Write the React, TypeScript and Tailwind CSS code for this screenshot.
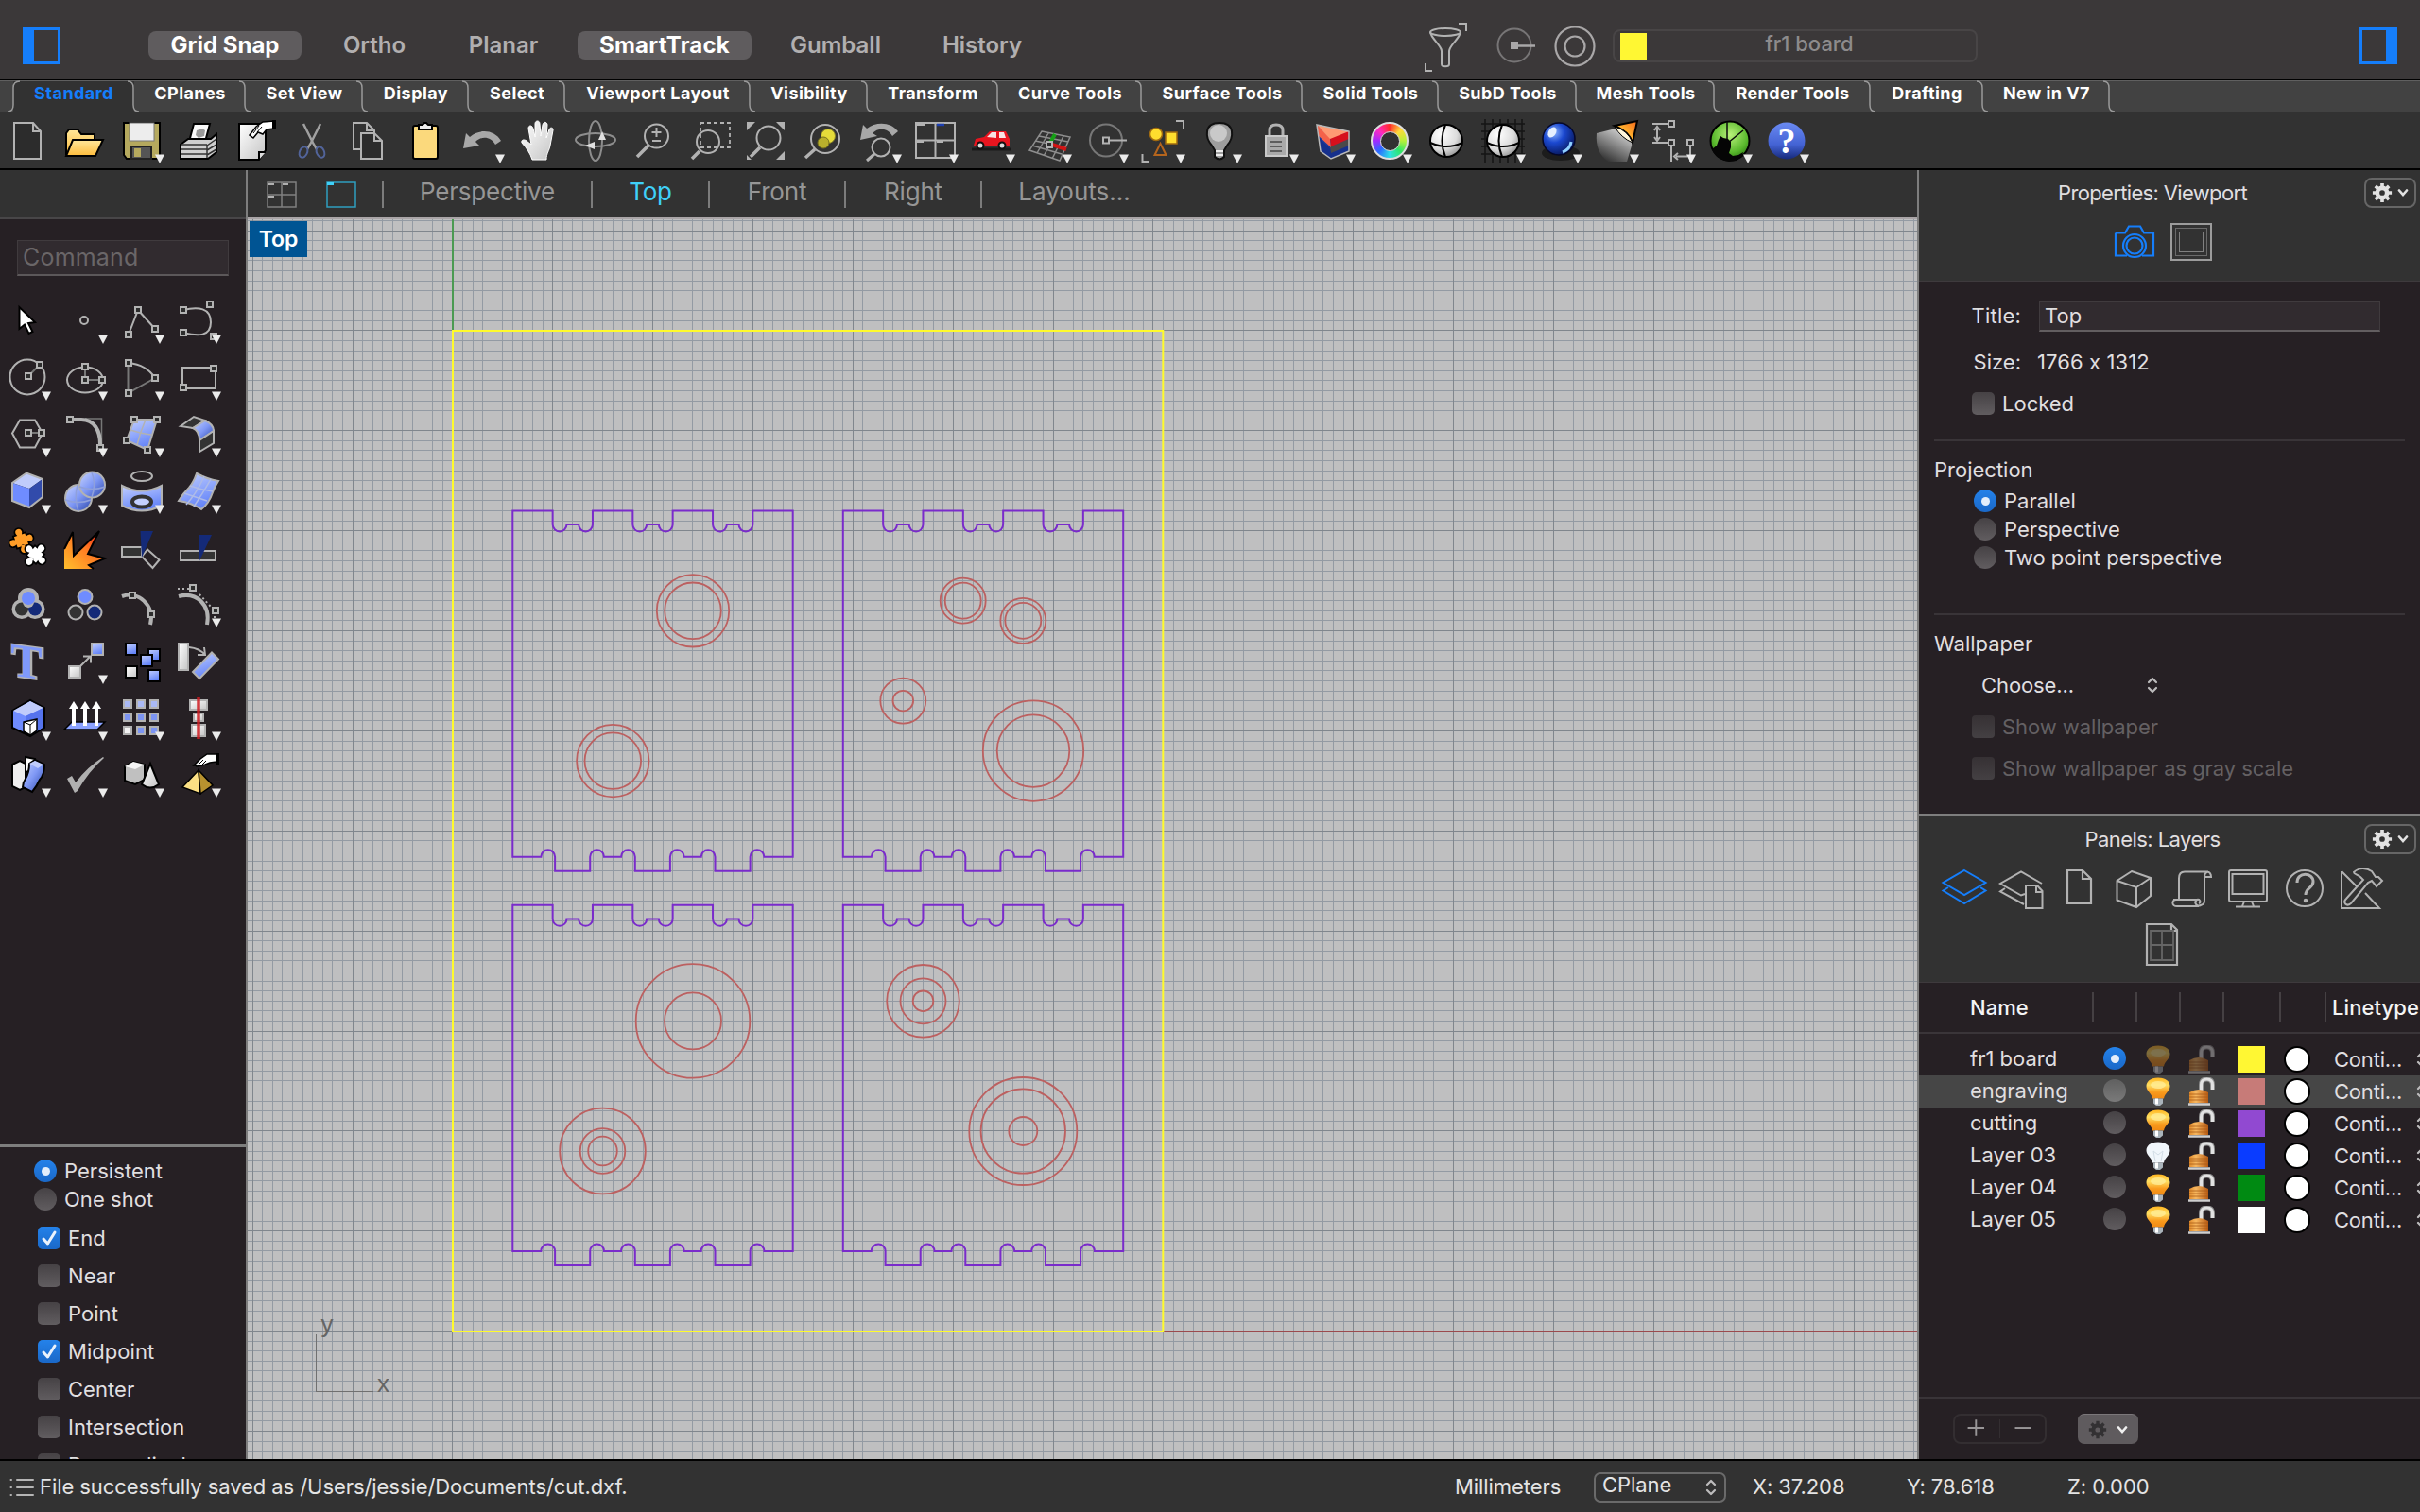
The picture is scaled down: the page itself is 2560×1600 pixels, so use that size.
import React from "react";

/* ---------- shared drawing helpers ---------- */

const LINE = "#b2b2b2";

const Cell = ({ children, arrow }: { children?: React.ReactNode; arrow?: boolean }) => (
  <svg className="h-[60px] w-[60px] shrink-0" viewBox="0 0 60 60" fill="none" stroke={LINE} strokeWidth={2}>
    {children}
    {arrow && <path d="M44 44.5h10l-5 9.5z" fill="#ececec" stroke="none" />}
  </svg>
);

const H = ({ x, y }: { x: number; y: number }) => (
  <rect x={x - 3} y={y - 3} width={6} height={6} fill="#2d2d2d" stroke={LINE} strokeWidth={2} />
);

const Defs = () => (
  <svg className="absolute h-0 w-0">
    <defs>
      <linearGradient id="blue" x1="0" y1="0" x2="0.4" y2="1">
        <stop offset="0" stopColor="#c3d0ff" />
        <stop offset="1" stopColor="#6484f8" />
      </linearGradient>
      <linearGradient id="blueDeep" x1="0" y1="0" x2="1" y2="1">
        <stop offset="0" stopColor="#c8d4ff" />
        <stop offset="0.5" stopColor="#7f98f5" />
        <stop offset="1" stopColor="#2a45a8" />
      </linearGradient>
      <linearGradient id="fire" x1="0" y1="1" x2="0.9" y2="0.1">
        <stop offset="0" stopColor="#ffc02e" />
        <stop offset="0.6" stopColor="#ff7a22" />
        <stop offset="1" stopColor="#f02a18" />
      </linearGradient>
      <linearGradient id="white" x1="0" y1="0" x2="1" y2="1">
        <stop offset="0" stopColor="#ffffff" />
        <stop offset="1" stopColor="#c4c4c4" />
      </linearGradient>
      <linearGradient id="gold" x1="0" y1="0" x2="0" y2="1">
        <stop offset="0" stopColor="#ffe79a" />
        <stop offset="1" stopColor="#fdbb3c" />
      </linearGradient>
      <linearGradient id="lamp" x1="0" y1="1" x2="1" y2="0">
        <stop offset="0" stopColor="#ffd75e" />
        <stop offset="0.5" stopColor="#ffb02e" />
        <stop offset="1" stopColor="#f2661a" />
      </linearGradient>
      <radialGradient id="ball" cx="0.35" cy="0.3" r="0.8">
        <stop offset="0" stopColor="#ffffff" />
        <stop offset="0.6" stopColor="#dcdcdc" />
        <stop offset="1" stopColor="#8a8a8a" />
      </radialGradient>
      <radialGradient id="blueBall" cx="0.35" cy="0.3" r="0.8">
        <stop offset="0" stopColor="#8ab4ff" />
        <stop offset="0.4" stopColor="#1b48d0" />
        <stop offset="1" stopColor="#04104a" />
      </radialGradient>
      <radialGradient id="green" cx="0.5" cy="0.35" r="0.65">
        <stop offset="0" stopColor="#b9f27a" />
        <stop offset="0.7" stopColor="#58b82c" />
        <stop offset="1" stopColor="#2f7d14" />
      </radialGradient>
      <linearGradient id="help" x1="0" y1="0" x2="0" y2="1">
        <stop offset="0" stopColor="#6a8af2" />
        <stop offset="0.6" stopColor="#4463d4" />
        <stop offset="1" stopColor="#16297a" />
      </linearGradient>
      <linearGradient id="bulbOn" x1="0" y1="0" x2="0" y2="1">
        <stop offset="0" stopColor="#ffb41f" />
        <stop offset="0.35" stopColor="#ffe063" />
        <stop offset="0.7" stopColor="#f99a1c" />
        <stop offset="1" stopColor="#f08a14" />
      </linearGradient>
      <linearGradient id="lockBody" x1="0" y1="0" x2="1" y2="0">
        <stop offset="0" stopColor="#e08a2a" />
        <stop offset="0.35" stopColor="#f8b860" />
        <stop offset="1" stopColor="#b85a12" />
      </linearGradient>
      <linearGradient id="beam" x1="0.9" y1="0" x2="0.3" y2="1">
        <stop offset="0" stopColor="#e8e8e8" />
        <stop offset="1" stopColor="#323232" />
      </linearGradient>
    </defs>
  </svg>
);

/* ---------- top strip ---------- */

const PanelToggle = ({ right }: { right?: boolean }) => (
  <div className={right ? "h-[39px] w-[40px] border-[3px] border-r-[12px] border-[#157efb]" : "h-[39px] w-[40px] border-[3px] border-l-[12px] border-[#157efb]"} />
);

const SnapBar = () => (
  <div className="flex h-[84px] items-center bg-[#3b3839] pt-[13px] text-[24px] font-semibold leading-[30px] text-[#b1afb0] whitespace-nowrap">
    <div className="w-[157px] shrink-0 pl-[24px]"><PanelToggle /></div>
    <div className="flex h-[30px] w-[162px] -translate-y-px justify-center rounded-[8px] bg-[#5f5c5e] font-bold text-white tracking-[0px]">Grid Snap</div>
    <div className="-translate-y-px w-[154px] text-center">Ortho</div>
    <div className="-translate-y-px w-[119px] text-center">Planar</div>
    <div className="ml-[19px] flex h-[30px] w-[184px] -translate-y-px justify-center rounded-[8px] bg-[#5f5c5e] font-bold text-white tracking-[0.2px]">SmartTrack</div>
    <div className="ml-[30px] -translate-y-px w-[118px] text-center">Gumball</div>
    <div className="ml-[37px] -translate-y-px w-[118px] text-center">History</div>
    <svg className="ml-[402px] h-[60px] w-[60px] -translate-y-px" viewBox="0 0 60 60" fill="none" stroke={LINE} strokeWidth={2}>
      <path d="M8 49v8h7M43 7h8v8" />
      <ellipse cx="29" cy="16" rx="16" ry="4" />
      <path d="M13 16c1 7 12 14 12 20v14c0 3 8 3 8 0V36c0-6 11-13 12-20" />
    </svg>
    <svg className="ml-[18px] h-[48px] w-[48px] -translate-y-px" viewBox="0 0 48 48" fill="none">
      <circle cx="24" cy="24" r="17.5" stroke="#777576" strokeWidth={2} />
      <rect x="20" y="20" width="8" height="8" fill="#a9a7a8" />
      <path d="M26 24.500h20" stroke="#a9a7a8" strokeWidth={2.500} />
    </svg>
    <svg className="ml-[16px] h-[48px] w-[48px]" viewBox="0 0 48 48" fill="none" stroke="#a9a7a8" strokeWidth={2.200}>
      <circle cx="24" cy="24" r="20.500" />
      <circle cx="24" cy="24" r="10.500" />
    </svg>
    <div className="ml-[16px] flex h-[35px] w-[386px] items-center rounded-[8px] border-2 border-[#484546] pl-[6px] text-[22px] font-medium text-[#8d8b8c]">
      <div className="h-7 w-7 bg-[#fff733]" />
      <div className="w-[344px] text-center -translate-y-[3px]">fr1 board</div>
    </div>
    <div className="ml-auto pr-[24px]"><PanelToggle right /></div>
  </div>
);

const TABS: [string, string][] = [
  ["Standard", "w-[128px]"], ["CPlanes", "w-[118px]"], ["Set View", "w-[124px]"], ["Display", "w-[112px]"],
  ["Select", "w-[102px]"], ["Viewport Layout", "w-[196px]"], ["Visibility", "w-[124px]"], ["Transform", "w-[138px]"],
  ["Curve Tools", "w-[152px]"], ["Surface Tools", "w-[170px]"], ["Solid Tools", "w-[144px]"], ["SubD Tools", "w-[146px]"],
  ["Mesh Tools", "w-[146px]"], ["Render Tools", "w-[165px]"], ["Drafting", "w-[119px]"], ["New in V7", "w-[134px]"],
];

const TabStrip = () => (
  <div className="flex h-[35px] border-t border-black bg-[#424242] text-[18px] font-bold leading-[26px] tracking-[0.45px] text-white whitespace-nowrap">
    <div className="h-[34px] w-[14px] shrink-0 border-y border-[#8c8c8c] border-t-[#606060]" />
    {TABS.map(([name, w], i) => (
      <div
        key={name}
        className={
          w + (i === 0
            ? " relative h-[34px] shrink-0 border-t border-[#606060] bg-[#323232] text-center text-[#157efb]"
            : " relative h-[34px] shrink-0 border-y border-b-[#9a9a9a] border-t-[#606060] text-center")
        }
      >
        {name}
        {i === 0 && (
          <svg className="absolute -left-[6px] -top-px" width="14" height="34" viewBox="0 0 14 34" fill="none" stroke="#9a9a9a" strokeWidth={1.500}>
            <path d="M0 33q6 0 6-7V8q0-7 7-7" />
          </svg>
        )}
        <svg className="absolute -right-[6px] -top-px z-10" width="14" height="34" viewBox="0 0 14 34" fill="none" stroke="#9a9a9a" strokeWidth={1.500}>
          <path d="M1 1q6 0 6 7v18q0 7 6 7" />
        </svg>
      </div>
    ))}
    <div className="h-[34px] flex-1 border-y border-b-[#8c8c8c] border-t-[#606060]" />
  </div>
);

/* ---------- main toolbar ---------- */

const Toolbar = () => (
  <div className="flex h-[61px] border-b-2 border-black bg-[#323232]">
    <Cell>
      <path d="M15 11h20l8 9v29H15zM35 11v9h8" fill="#2c2c2c" />
    </Cell>
    <Cell>
      <path d="M10 45V22l3-4h9l4 5h14v6" fill="url(#gold)" stroke="#000" />
      <path d="M10 46l7-17h32l-8 17z" fill="url(#gold)" stroke="#000" />
    </Cell>
    <Cell arrow>
      <path d="M11 11h38v38H14l-3-4z" fill="#b5a95e" stroke="#000" />
      <rect x="17" y="11" width="26" height="19" fill="#ededed" stroke="#777" strokeWidth={1} />
      <rect x="19" y="36" width="21" height="13" fill="#555" stroke="#222" />
      <rect x="22" y="38" width="7" height="9" fill="#b5a95e" stroke="none" />
    </Cell>
    <Cell>
      <path d="M20 31l5-19h17l-5 19z" fill="#fafafa" stroke="#000" />
      <path d="M28 19l6-2 3 2-1 6-6 2-3-3z" fill="#999" stroke="none" />
      <path d="M11 34l8-6h24l6-5v19l-9 7H11z" fill="#cfcfcf" stroke="#000" />
      <path d="M11 34h28M11 39h28M11 44h28M39 34v14M39 35l10-7M39 40l10-6M39 45l10-6" stroke="#333" strokeWidth={1.500} />
    </Cell>
    <Cell>
      <path d="M13 12h28v28l-7 10H13z" fill="url(#white)" stroke="#000" />
      <path d="M34 50v-8h7" fill="#ddd" stroke="#000" />
      <path d="M24 24l7-9 7-5 12-1v8l-8 1-4 5-5-2-5 6z" fill="#fff" stroke="#000" strokeWidth={1.500} />
      <path d="M28 22l6-8M32 21l5-6" stroke="#000" strokeWidth={1} />
      <path d="M50 8v10" stroke="#000" strokeWidth={4} />
    </Cell>
    <Cell>
      <path d="M21 12l10 20 4 7M39 12L29 32l-4 7" stroke="#a0a0a0" strokeWidth={2.500} />
      <ellipse cx="21" cy="42" rx="4" ry="6" stroke="#52649a" transform="rotate(25 21 42)" />
      <ellipse cx="39" cy="42" rx="4" ry="6" stroke="#52649a" transform="rotate(-25 39 42)" />
    </Cell>
    <Cell>
      <path d="M22 39h-8V11h14l8 8v3M28 11v8h7" />
      <path d="M22 22h14l8 8v19H22z" fill="#2c2c2c" />
      <path d="M36 22v8h8" />
    </Cell>
    <Cell>
      <rect x="17" y="14" width="26" height="35" rx="2" fill="#fbd97c" stroke="#000" />
      <path d="M23 18v-5h4l2-2h2l2 2h4v5z" fill="#eee" stroke="#000" />
    </Cell>
    <Cell arrow>
      <path d="M10 38l3-16 4 4c10-9 26-8 33 4l-6 4c-5-9-15-9-21-3l4 4z" fill="#a8a8a8" stroke="none" />
    </Cell>
    <Cell>
      <path
        d="M23 50c-2-7-6-12-11-18-1-3 2-4 5-2l5 4-3-17c0-4 4-4 5 0l2 9V12c0-4 5-4 5 0l1 13 2-12c1-4 5-3 5 0l-1 14 3-9c1-3 5-2 4 1l-3 16c-1 6-4 8-4 15z"
        fill="url(#white)" stroke="#fff" strokeWidth={1}
      />
    </Cell>
    <Cell>
      <ellipse cx="30" cy="30" rx="7" ry="21" stroke="#8d8d8d" />
      <ellipse cx="30" cy="29" rx="21" ry="7" stroke="#8d8d8d" />
      <path d="M37 20l4 9h-8zM19 35l10-4v8z" fill="#e0e0e0" stroke="none" />
    </Cell>
    <Cell>
      <circle cx="34.500" cy="25" r="12.500" />
      <path d="M26 35L14 47" strokeWidth={3.500} />
      <path d="M34.500 16v10M29.500 21h10M30 30h9" />
    </Cell>
    <Cell>
      <circle cx="29" cy="31" r="12" />
      <path d="M20 41l-8 8" strokeWidth={3.500} />
      <path d="M21 11h31v26H21z" strokeDasharray="4 3" strokeWidth={1.800} />
    </Cell>
    <Cell>
      <circle cx="33" cy="27" r="12.500" />
      <path d="M24 37L14 47" strokeWidth={3.500} />
      <path d="M10 10h9l-9 9zM50 10h-9l9 9zM50 50h-9l9-9zM10 50h5l-5-5z" fill={LINE} stroke="none" />
    </Cell>
    <Cell>
      <circle cx="33" cy="28" r="15" />
      <circle cx="36" cy="25" r="7.500" fill="#e5dc3a" stroke="#8a8428" strokeWidth={1} />
      <circle cx="31" cy="32" r="6" fill="#b9b02c" stroke="#77711c" strokeWidth={1} />
      <path d="M22 39l-10 9" strokeWidth={3.500} />
    </Cell>
    <Cell arrow>
      <path d="M10 29l3-16 4 4c10-8 26-7 33 3l-6 5c-5-9-15-9-21-3l5 3z" fill="#a8a8a8" stroke="none" />
      <circle cx="32" cy="37" r="9.500" fill="#323232" />
      <path d="M25 44l-8 7" strokeWidth={3} />
    </Cell>
    <Cell arrow>
      <path d="M9 11h41v37H9zM29.500 11v37M9 29.500h41" />
      <path d="M10 13h8M31 31h7M10 31h7" strokeWidth={2} />
      <path d="M31 13h8" stroke="#1d3fb0" strokeWidth={2.500} />
    </Cell>
    <Cell arrow>
      <path d="M8 39h42" stroke="#1a1a1a" strokeWidth={3} />
      <path d="M10 35l2-7 9-2 6-6h17l4 8v8H10z" fill="#e8151f" stroke="none" />
      <path d="M24 26l5-5h5v6zM37 21h5l2 6h-7z" fill="#f7e3e3" stroke="none" />
      <circle cx="17" cy="35" r="3.500" fill="#ddd" stroke="#111" />
      <circle cx="40" cy="35" r="3.500" fill="#ddd" stroke="#111" />
    </Cell>
    <Cell arrow>
      <path d="M22 20l30 6-11 25-32-11zM29 22L17 43M37 23L24 46M45 25L33 49M19 25l31 6M15 30l33 7M12 35l31 9" stroke="#8e8e8e" strokeWidth={1.500} />
      <path d="M31 32l5-9" stroke="#16a016" strokeWidth={4} />
      <path d="M33 34l15 5" stroke="#d01515" strokeWidth={4} />
      <H x={30} y={34} />
    </Cell>
    <Cell arrow>
      <circle cx="30" cy="29.500" r="17" stroke="#777" />
      <path d="M33 29.500h19" />
      <H x={30} y={29.500} />
    </Cell>
    <Cell arrow>
      <path d="M44 9h8v8M8.500 44v8h7" />
      <circle cx="23" cy="23" r="6.500" fill="#ffde2e" stroke="#a06a10" strokeWidth={1.500} />
      <rect x="33" y="21" width="12" height="12" fill="#ffde2e" stroke="#a06a10" strokeWidth={1.500} />
      <path d="M27.500 33l6 12h-12z" stroke="#b5651d" />
    </Cell>
    <Cell arrow>
      <path d="M30 11c-17 0-15 16-8 24l3 5v7q5 5 10 0v-7l3-5c7-8 9-24-8-24z" fill="#9e9e9e" stroke="#111" />
      <circle cx="29" cy="22" r="9" fill="#c9c9c9" stroke="none" />
      <path d="M26 41h8M26 45h8" stroke="#eee" />
    </Cell>
    <Cell arrow>
      <path d="M23 26v-7q0-6 7-6t7 6v7" strokeWidth={3} />
      <rect x="19" y="25" width="22" height="21" fill="#a9a9a9" stroke="#c9c9c9" />
      <path d="M24 31h12M24 36h12M24 41h12" stroke="#444" strokeWidth={1.500} />
    </Cell>
    <Cell arrow>
      <path d="M13 13l4 28 11 8 19-8V20z" fill="#1a3a9c" stroke="none" />
      <path d="M15 27l13 12 19-7v9L28 49l-11-8z" fill="#16308c" stroke="none" />
      <path d="M27 36l20-8v7l-19 8z" fill="#4a4a4a" stroke="none" />
      <path d="M13 13l14 14 1 10-13-12z" fill="#f4624a" stroke="none" />
      <path d="M27 27l20-7v8l-19 8z" fill="#d6101c" stroke="none" />
      <path d="M13 13l34 7-20 8z" fill="#ff9a73" stroke="none" />
      <path d="M13 13l4 28 11 8 19-8V20z" stroke="#b9b9b9" strokeWidth={1.500} />
    </Cell>
    <div className="flex h-[60px] w-[60px] items-center justify-center">
      <svg className="absolute h-[60px] w-[60px]" viewBox="0 0 60 60"><path d="M44 44.500h10l-5 9.500z" fill="#ececec" /></svg>
      <div className="flex h-10 w-10 items-center justify-center rounded-full border-2 border-[#ddd] bg-[conic-gradient(#ff2a2a,#ffd93a,#b6f03a,#2ee66a,#2ee0e6,#2a6cff,#a02aff,#ff2ac0,#ff2a2a)]">
        <div className="h-[21px] w-[21px] rounded-full border border-[#ddd] bg-[#323232]" />
      </div>
    </div>
    <Cell>
      <circle cx="30" cy="30" r="17" fill="url(#ball)" stroke="#000" />
      <path d="M13 32q17 8 34 0M29 13q-7 17 0 34" stroke="#000" />
    </Cell>
    <Cell arrow>
      <path d="M7 12h46M7 20h46M7 28h46M7 36h46M7 44h46M11 7v46M19 7v46M27 7v46M35 7v46M43 7v46M50 7v46" stroke="#151515" strokeWidth={1.500} />
      <circle cx="30" cy="30" r="17" fill="url(#ball)" stroke="#000" />
      <path d="M13 32q17 8 34 0M29 13q-7 17 0 34" stroke="#000" />
    </Cell>
    <Cell arrow>
      <ellipse cx="31" cy="43" rx="20" ry="8" fill="#1c1c1c" stroke="none" />
      <circle cx="29" cy="28" r="17" fill="url(#blueBall)" stroke="#05082a" strokeWidth={1.500} />
      <ellipse cx="22" cy="21" rx="4" ry="6" fill="#e6f0ff" stroke="none" transform="rotate(30 22 21)" />
      <path d="M33 42q8-3 9-11" stroke="#8fd0ff" strokeWidth={3} />
    </Cell>
    <Cell arrow>
      <path d="M29 17L9 22q-2 20 12 30h20l6-20z" fill="url(#beam)" stroke="none" />
      <path d="M28 14l24-5-5 23q-4-12-19-18z" fill="url(#lamp)" stroke="#000" />
      <path d="M28 15q14 4 19 17-12-5-19-17z" fill="#fff6dd" stroke="#000" strokeWidth={1} />
    </Cell>
    <Cell arrow>
      <path d="M8 12h17M8 32h17M13 17v11M10 19l3-4 3 4M10 26l3 4 3-4M28 36v16M48 36v16M33 46.500h12M35 43l-4 3.500 4 3.500" strokeWidth={2} />
      <H x={28} y={12} /><H x={28} y={32} /><H x={48} y={32} />
    </Cell>
    <Cell arrow>
      <circle cx="30" cy="30" r="20.500" fill="url(#green)" stroke="#000" />
      <path d="M27 10v20M44 19L28 32" stroke="#0a0a0a" strokeWidth={1.500} />
      <path d="M18 29l2-4 3 2 5 1 3 3v6l-2 6 4 3 6-1 5-3-1 4-6 5-8 1-5-1q-10-3-13-12l5-4z" fill="#050505" stroke="none" />
    </Cell>
    <Cell arrow>
      <circle cx="30" cy="30" r="19.500" fill="url(#help)" stroke="none" />
      <text x="30" y="43" textAnchor="middle" fill="#fff" stroke="none" fontFamily="Liberation Serif, serif" fontWeight="700" fontSize="38">?</text>
    </Cell>
  </div>
);

/* ---------- left column ---------- */

const Sq = ({ x, y, s = 10, fill = "url(#blue)", stroke = LINE }: { x: number; y: number; s?: number; fill?: string; stroke?: string }) => (
  <rect x={x - s / 2} y={y - s / 2} width={s} height={s} fill={fill} stroke={stroke} />
);

const Jigsaw = ({ x, y, turn, fill }: { x: number; y: number; turn: number; fill: string }) => (
  <g transform={`translate(${x} ${y}) rotate(${turn})`}>
    {["#000", fill].map((c, i) => (
      <g key={c} fill={c} stroke={c} strokeWidth={i ? 0 : 3.5}>
        <path d="M-6-6h3.500q-1-2-1-3a3.500 3.500 0 0 1 7 0q0 1-1 3H6v3.500q2-1 3-1a3.500 3.500 0 0 1 0 7q-1 0-3-1V6H2.500q-2-3-5 0H-6V2.500q-2 1-3 1a3.500 3.500 0 0 1 0-7q1 0 3 1z" />
        <path d="M-2 5h4q-.5 2 1.200 3.500a3.500 3.500 0 1 1-6.400 0Q-1.500 7-2 5z" />
      </g>
    ))}
  </g>
);

const ToolPalette = () => (
  <div className="grid w-[240px] grid-cols-[60px_60px_60px_60px]">
    <Cell><path d="M20.500 15v23l5.500-4.500 4.500 9.500 4-2-4.500-9 7-1z" fill="#fff" stroke="#000" /></Cell>
    <Cell arrow><circle cx="29" cy="29" r="4" /></Cell>
    <Cell arrow><path d="M16 44l10-26 18 20" /><H x={16} y={44} /><H x={26} y={18} /><H x={44} y={38} /></Cell>
    <Cell arrow><path d="M14 18C30 14 43 16 43 31S30 46 14 42" /><H x={14} y={18} /><H x={42} y={12} /><H x={14} y={42} /><H x={46} y={46} /></Cell>

    <Cell arrow><circle cx="29" cy="29" r="18.500" /><path d="M30 28l12-12" stroke="#777" /><H x={30} y={28} /><H x={42} y={16} /></Cell>
    <Cell arrow><ellipse cx="30" cy="32" rx="19" ry="13.500" /><path d="M30 18v14h18" stroke="#777" /><H x={30} y={18} /><H x={30} y={32} /><H x={48} y={32} /></Cell>
    <Cell arrow><path d="M15.500 14v32L44 30" stroke="#777" /><path d="M16 14q19 2 28 16" /><H x={16} y={14} /><H x={44} y={30} /><H x={16} y={46} /></Cell>
    <Cell arrow><path d="M13 19h35v22H13z" /><H x={46} y={20} /><H x={14} y={40} /></Cell>

    <Cell arrow><path d="M13 28.500l8-14h16l8 14-8 15H21z" /><path d="M30 28h14" stroke="#777" /><H x={30} y={28} /><H x={44} y={28} /></Cell>
    <Cell arrow><path d="M30 13h17.500v28" stroke="#777" strokeWidth={1.500} /><H x={14} y={14} /><H x={46} y={44} /><path d="M18 14h8c14 0 20 12 20 26" strokeWidth={4} /></Cell>
    <Cell arrow>
      <path d="M22 14h24L36 46 14 36z" fill="url(#blue)" />
      <path d="M34 14q-6 14-9 27M18 25q12 4 22 5" strokeWidth={1.500} />
      <H x={22} y={14} /><H x={46} y={14} /><H x={36} y={46} /><H x={14} y={36} />
    </Cell>
    <Cell arrow>
      <path d="M11 21l14-10 12 4-13 8z" fill="#333" />
      <path d="M24 23l13-8q9 4 9 11l-15 10q0-10-7-13z" fill="url(#blueDeep)" />
      <path d="M31 36l15-10v13L31 48z" fill="#333" />
    </Cell>

    <Cell arrow>
      <path d="M13 21l15-10.500L45 17 31 27z" fill="#c0ccfb" stroke="none" />
      <path d="M13 21l18 6v20l-18-7z" fill="#6f8cff" stroke="none" />
      <path d="M31 27l14-10v19L31 47z" fill="#324bab" stroke="none" />
      <path d="M13 21l15-10.500L45 17v19L31 47l-18-7z" />
    </Cell>
    <Cell arrow>
      <circle cx="23" cy="37" r="14" fill="url(#blueDeep)" /><path d="M9 39q14 5 27 0M22 23q-4 14 1 28" stroke="#8fa0dc" strokeWidth={1.500} />
      <circle cx="37.500" cy="23" r="13.500" fill="url(#blueDeep)" /><path d="M24 25q14 5 27 0M37 10q5 13 0 26" stroke="#8fa0dc" strokeWidth={1.500} />
    </Cell>
    <Cell arrow>
      <ellipse cx="30" cy="14" rx="11" ry="5" />
      <path d="M9 24q21 11 42 0v21q-21 11-42 0z" fill="url(#blue)" />
      <ellipse cx="30" cy="41" rx="10" ry="5.500" fill="#c3d0ff" stroke="#333" strokeWidth={4} />
    </Cell>
    <Cell arrow>
      <path d="M28 11q11 6 23 8-4 6-6 12-4 12-12 18-10-7-24-9 5-8 11-14 5-6 8-15z" fill="url(#blue)" />
      <path d="M36 14q-8 18-19 30M43 17Q34 33 25 46M21 24q11 4 24 6M15 32q12 4 24 8" stroke="#aebbe8" strokeWidth={1.500} />
    </Cell>

    <Cell>
      <Jigsaw x={22.500} y={22} turn={-18} fill="#ff9d28" />
      <Jigsaw x={37.500} y={37} turn={42} fill="#ffffff" />
    </Cell>
    <Cell>
      <path d="M8 52V31l9-18 1 25 27-26-12 24 18 5-17 7 5 4z" fill="url(#fire)" stroke="none" />
      <path d="M8 31l9-18 1 25 27-26-12 24 18 5-17 7 5 4" stroke="#000" />
    </Cell>
    <Cell>
      <path d="M9 29h21v10H9z" fill="#333" />
      <path d="M30 39l6-7.500 12.500 11-7 8.500z" fill="#262024" />
      <path d="M28.500 12H42L30 40z" fill="#142a78" stroke="none" />
    </Cell>
    <Cell>
      <path d="M11 33h37v10H11z" fill="#333" />
      <path d="M30 16h14L31 43.500z" fill="#142a78" stroke="none" />
    </Cell>

    <Cell arrow>
      <g strokeWidth={3} stroke={LINE}>
        <circle cx="30" cy="23" r="9.500" fill={LINE} /><circle cx="23" cy="34.500" r="9" fill={LINE} /><circle cx="37" cy="34.500" r="9" fill={LINE} />
      </g>
      <g stroke="none"><circle cx="23" cy="34.500" r="7" fill="#333" /><circle cx="37" cy="34.500" r="7" fill="#142a78" /><circle cx="30" cy="27" r="6" fill={LINE} /><circle cx="30" cy="23" r="7" fill="#6f8cff" /></g>
    </Cell>
    <Cell><circle cx="30" cy="21.500" r="7.500" fill="#6f8cff" /><circle cx="20" cy="38" r="7.500" fill="#333" /><circle cx="40" cy="38" r="7.500" fill="#142a78" /></Cell>
    <Cell><path d="M9 21C26 15 44 30 39 51" strokeWidth={4} /><H x={20} y={20} /><H x={40} y={40} /></Cell>
    <Cell arrow>
      <path d="M9 21C28 16 43 30 39 51" strokeWidth={4} />
      <path d="M8 13h12M31 19l12 13M47 42v4" strokeDasharray="2 3" />
      <H x={24} y={12} /><H x={48} y={36} />
    </Cell>

    <Cell>
      <text x="29" y="47" textAnchor="middle" fontFamily="Liberation Serif, serif" fontWeight="700" fontSize="50" fill="#2b46ac" stroke={LINE} strokeWidth={3} transform="translate(0,-4) skewY(8)">T</text>
      <text x="28" y="47" textAnchor="middle" fontFamily="Liberation Serif, serif" fontWeight="700" fontSize="50" fill="#7f99fb" stroke="none" transform="translate(0,-4) skewY(8)">T</text>
    </Cell>
    <Cell arrow><path d="M25 35l10-10M28 24.500h8v7" /><rect x="37" y="11" width="12" height="12" fill="url(#blue)" /><rect x="13" y="35" width="12" height="12" fill="url(#white)" /></Cell>
    <Cell>
      <Sq x={19} y={17} s={12} stroke="#000" /><Sq x={43} y={23} s={12} stroke="#000" /><Sq x={35} y={29} s={12} stroke="#000" />
      <Sq x={19} y={41} s={12} fill="url(#white)" stroke="#000" /><Sq x={43} y={45} s={12} stroke="#000" />
    </Cell>
    <Cell>
      <rect x="9" y="11" width="10" height="28" fill="url(#white)" />
      <path d="M20 15q11 1 17 8M36 15l1 8-8 0" />
      <path d="M44 20.500l7 7L31 48l-7-7z" fill="url(#blue)" />
    </Cell>

    <Cell arrow>
      <path d="M13 22l19-11 15 8v21L32 49l-19-9z" fill="#6f8cff" stroke="#000" />
      <path d="M14 22l18-10 14 7-19 9z" fill="#c0ccfb" stroke="none" />
      <path d="M27 28l19-9v20l-7 5V31l-12 4z" fill="#5573ee" stroke="none" />
      <path d="M25 34l14-3v12l-7 5-7-4z" fill="#fff" stroke="#000" strokeWidth={1.500} />
      <path d="M25 34l7 3 7-6M32 37v11" stroke="#000" strokeWidth={1} />
    </Cell>
    <Cell arrow>
      <path d="M16 34h35l-8 8H8z" fill="#8ba2ff" stroke="#000" strokeWidth={1.500} />
      <path d="M18 20v18M30 20v18M42 20v18" stroke="#fff" strokeWidth={4} />
      <path d="M13 20l5-8 5 8zM25 20l5-8 5 8zM37 20l5-8 5 8z" fill="#fff" stroke="none" />
    </Cell>
    <Cell arrow>
      {[15, 29, 43].map((y) => [15, 29, 43].map((x) => (
        <Sq key={x + "-" + y} x={x} y={y} s={8} fill={x === 15 && y === 43 ? "#f2f2f2" : y === 15 ? "#aab9f5" : "#7c94f2"} />
      )))}
    </Cell>
    <Cell arrow>
      <rect x="21" y="11" width="18" height="10" fill="url(#white)" /><rect x="25" y="25" width="10" height="8" fill="url(#white)" /><rect x="23" y="37" width="14" height="12" fill="url(#white)" />
      <path d="M30 8v44" stroke="#d01c22" strokeWidth={3.500} opacity={0.850} />
    </Cell>

    <Cell arrow>
      <path d="M27 11l10 2-2 12-8 2z" fill="#fff" stroke="#000" />
      <path d="M13 19l8-4 6 3v25l-6 3-8-4z" fill="#eee" stroke="#000" />
      <path d="M31 18l6-4 10 5q0 11-5 16-3 7-8 13l-10-5q0-5 3-9 4-7 4-16z" fill="url(#blueDeep)" stroke="#000" />
      <path d="M31 18l6-3 9 4-6 4z" fill="#c0ccfb" stroke="none" />
    </Cell>
    <Cell arrow><path d="M11 34l5-3 4 7q12-16 29-27l1 1Q34 26 22 47l-3 2z" fill="#b0b0b0" stroke="none" /></Cell>
    <Cell arrow>
      <path d="M12 21l9-5 12 3v16l-10 5-11-4z" fill="#c0c0c0" stroke="#000" />
      <path d="M12 21l9-5 12 3-10 5z" fill="#f4f4f4" stroke="none" />
      <path d="M39 18l9 22q-9 7-18 0z" fill="url(#white)" stroke="#000" />
    </Cell>
    <Cell arrow>
      <path d="M30 25L13 43l19 7z" fill="#fbdf84" stroke="#000" strokeWidth={1.500} />
      <path d="M30 25l15 16-13 9z" fill="#b8922f" stroke="#000" strokeWidth={1.500} />
      <path d="M25 20l7-7 7-5h10v8l-7 1-5 2-4 1-5 1-1-1z" fill="#fff" stroke="#000" strokeWidth={1.500} />
      <path d="M29 20l6-6M33 20l5-5" stroke="#000" strokeWidth={1} />
      <path d="M50 7v12" stroke="#000" strokeWidth={4} />
    </Cell>
  </div>
);

const Radio = ({ on, light }: { on?: boolean; light?: boolean }) => (
  <div
    className={
      on
        ? "flex h-6 w-6 shrink-0 items-center justify-center rounded-full bg-linear-to-b from-[#2482ea] to-[#1a68c8]"
        : light
          ? "h-6 w-6 shrink-0 rounded-full bg-linear-to-b from-[#606060] to-[#7a7a7a]"
          : "h-6 w-6 shrink-0 rounded-full bg-linear-to-b from-[#464245] to-[#615d60]"
    }
  >
    {on && <div className="h-[9px] w-[9px] rounded-full bg-[#e4eefb]" />}
  </div>
);

const Check = ({ on, dim }: { on?: boolean; dim?: boolean }) => (
  <div
    className={
      on
        ? "h-6 w-6 shrink-0 rounded-[5px] bg-linear-to-b from-[#2482ea] to-[#1a68c8]"
        : dim
          ? "h-6 w-6 shrink-0 rounded-[4px] bg-linear-to-b from-[#363134] to-[#444043]"
          : "h-6 w-6 shrink-0 rounded-[5px] bg-linear-to-b from-[#464245] to-[#615d60]"
    }
  >
    {on && (
      <svg viewBox="0 0 24 24" className="h-6 w-6" fill="none" stroke="#eaf2fc" strokeWidth={3} strokeLinecap="round" strokeLinejoin="round">
        <path d="M6 13l4.500 5L18 6" />
      </svg>
    )}
  </div>
);

const OSNAPS: [string, boolean][] = [
  ["End", true], ["Near", false], ["Point", false], ["Midpoint", true], ["Center", false], ["Intersection", false], ["Perpendicular", false],
];

const LeftColumn = () => (
  <div className="flex w-[262px] shrink-0 flex-col border-r-2 border-[#7e7e7e] bg-[#262024]">
    <div className="h-[52px] shrink-0 border-b-2 border-[#484648] bg-[#323232]" />
    <div className="ml-[18px] mt-[22px] flex h-[38px] w-[224px] shrink-0 items-center border border-b-2 border-[#403b3e] border-b-[#5c585a] bg-[#312b2f] pl-[5px] text-[25px] tracking-[0.2px] text-[#6a6668]">
      Command
    </div>
    <div className="mt-[18px] h-[901px] shrink-0"><ToolPalette /></div>
    <div className="h-[3px] shrink-0 bg-[#7e7e7e]" />
    <div className="min-h-0 flex-1 overflow-hidden pt-[10px] text-[22px] tracking-[0.05px] text-[#e0dfe0] whitespace-nowrap">
      <div className="flex h-[30px] items-center gap-[8px] pl-[36px]"><Radio on />Persistent</div>
      <div className="flex h-[30px] items-center gap-[8px] pl-[36px]"><Radio />One shot</div>
      <div className="pt-[6px]">
        {OSNAPS.map(([name, on]) => (
          <div key={name} className="flex h-[40px] items-center gap-[8px] pl-[40px]"><Check on={on} />{name}</div>
        ))}
      </div>
    </div>
  </div>
);

/* ---------- viewport ---------- */

const U = 10.587;
const VX = 262;
const VY = 232;
const OX = 478.870 - VX;
const OY = 1408.650 - VY;
const W = 1766;
const HGT = 1312;

const gridPath = (major: boolean) => {
  let d = "";
  for (let i = -21; i <= 147; i++) {
    if ((i % 10 === 0) !== major) continue;
    const x = Math.floor(OX + i * U) + 0.500;
    if (x > 0 && x < W) d += "M" + x + " 0V" + HGT;
  }
  for (let i = -13; i <= 112; i++) {
    if ((i % 10 === 0) !== major) continue;
    const y = Math.floor(OY - i * U) + 0.500;
    if (y > 0 && y < HGT) d += "M0 " + y + "H" + W;
  }
  return d;
};

const piece = (left: number, top: number, bottom: number) => {
  const x0 = left - VX;
  const y0 = top - VY;
  const y1 = bottom - VY;
  const p = 84.700;
  let d = "M" + x0 + " " + y0;
  for (let k = 0; k < 3; k++) {
    const x = x0 + 42.350 + p * k;
    d += "H" + x + "v14.700a7.400 7.400 0 0 0 14.800 0h12.700a7.400 7.400 0 0 0 14.800 0V" + y0;
  }
  d += "H" + (x0 + 296.400) + "V" + y1;
  for (let k = 2; k >= 0; k--) {
    const x = x0 + 96.700 + p * k;
    d += "H" + x + "a7.400 7.400 0 0 0 -14.800 0v15h-37.100v-15a7.400 7.400 0 0 0 -14.800 0";
  }
  return d + "H" + x0 + "Z";
};

const PIECES = [
  piece(542.300, 540.400, 906.700), piece(891.800, 540.400, 906.700),
  piece(542.300, 957.700, 1324), piece(891.800, 957.700, 1324),
].join("");

const CIRCLES: [number, number, number[]][] = [
  [733, 646.300, [38.200, 29.800]], [648.300, 805.100, [38.200, 29.800]],
  [1018.700, 635.700, [24, 19]], [1082.300, 656.800, [24, 19]],
  [955.300, 741.600, [24, 10.800]], [1093, 794.600, [53.200, 38.300]],
  [733, 1080.400, [60.300, 30]], [637.500, 1218, [45.300, 23.800, 15.300]],
  [976.500, 1059.300, [38.300, 24, 10.800]], [1082.300, 1197, [57, 44.700, 15]],
];

const Drawing = () => (
  <svg className="block h-[1312px] w-[1766px] bg-[#bfbfc0]" viewBox="0 0 1766 1312" fill="none">
    <g shapeRendering="crispEdges" strokeWidth={1}>
      <path d={gridPath(false)} stroke="#939aa3" />
      <path d={gridPath(true)} stroke="#80868d" />
      <path d="M217 0V118" stroke="#4b9a52" strokeWidth={2} />
      <path d="M968 1177H1766" stroke="#9b4a4d" strokeWidth={2} />
      <path d="M72.500 1180V1240.500H132.500" stroke="#707070" />
    </g>
    {CIRCLES.map(([x, y, rs]) => rs.map((r) => (
      <circle key={x + "-" + y + "-" + r} cx={x - VX} cy={y - VY} r={r} stroke="#bc6060" strokeWidth={1.800} />
    )))}
    <path d={PIECES} stroke="#7a2bcb" strokeWidth={2} />
    <path d="M217 118H968.300V1177H217z" stroke="#fffb2b" strokeWidth={2} />
    <g fill="#656565" fontFamily="Liberation Sans, sans-serif" fontSize="26">
      <text x="77.500" y="1178">y</text>
      <text x="137" y="1241">x</text>
    </g>
  </svg>
);

const Sep = () => <div className="h-[28px] w-[2px] shrink-0 bg-[#7c7c7c]" />;

const VIEW_TAB = "-translate-y-[3px] text-center";

const Viewport = () => (
  <div className="flex w-[1766px] shrink-0 flex-col">
    <div className="flex h-[50px] items-center bg-[#323232] pt-px text-[26px] tracking-[-0.2px] text-[#969696] whitespace-nowrap">
      <svg className="ml-[20px] h-7 w-[32px]" viewBox="0 0 32 28" fill="none" stroke="#808080" strokeWidth={1.500}>
        <path d="M1 1h30v26H1zM16 1v26M1 14h30" /><path d="M2 3h6M17 3h6M2 16h6" stroke="#b0b0b0" strokeWidth={2} />
      </svg>
      <svg className="ml-[31px] mr-[27px] h-7 w-[32px]" viewBox="0 0 32 28" fill="none" stroke="#2f9fc0" strokeWidth={1.500}>
        <path d="M1 1h30v26H1z" /><path d="M1 2.500h7" stroke="#3fd0f8" strokeWidth={3} />
      </svg>
      <Sep />
      <div className={VIEW_TAB + " w-[219px]"}>Perspective</div><Sep />
      <div className={VIEW_TAB + " w-[122px] text-[#3fd0f8]"}>Top</div><Sep />
      <div className={VIEW_TAB + " w-[142px]"}>Front</div><Sep />
      <div className={VIEW_TAB + " w-[142px]"}>Right</div><Sep />
      <div className={VIEW_TAB + " w-[195px] tracking-[0px]"}>Layouts...</div>
    </div>
    <div className="h-[2px] bg-[#a9a4a6]" />
    <div className="relative">
      <Drawing />
      <div className="absolute left-[2px] top-[2px] flex h-[38px] w-[61px] items-center justify-center bg-[#005493] text-[23px] font-semibold text-white">Top</div>
    </div>
  </div>
);

/* ---------- right column ---------- */

const GearShape = ({ color, size }: { color: string; size: string }) => (
  <svg className={size} viewBox="0 0 24 24" fill="none" stroke={color}>
    <circle cx="12" cy="12" r="5.600" strokeWidth={5} />
    <path d="M12 1v4M12 19v4M1 12h4M19 12h4M4.200 4.200l3 3M16.800 16.800l3 3M4.200 19.800l3-3M16.800 7.200l3-3" strokeWidth={4} />
  </svg>
);

const Down = ({ color }: { color: string }) => (
  <svg className="h-[8px] w-[12px]" viewBox="0 0 12 8" fill="none" stroke={color} strokeWidth={2.600} strokeLinecap="round"><path d="M2 1.500l4 4.500 4-4.500" /></svg>
);

const UpDown = () => (
  <svg className="h-[18px] w-[12px]" viewBox="0 0 12 18" fill="none" stroke="#bdbcbd" strokeWidth={2.200} strokeLinecap="round" strokeLinejoin="round">
    <path d="M2 6l4-4 4 4M2 12l4 4 4-4" />
  </svg>
);

const GearButton = () => (
  <div className="absolute right-[4px] top-[8px] flex h-[32px] w-[55px] items-center justify-center gap-[5px] rounded-[8px] border-2 border-[#666]">
    <GearShape color="#e2e2e2" size="h-[22px] w-[22px]" /><Down color="#e2e2e2" />
  </div>
);

const Rule = () => <div className="ml-[16px] h-[2px] w-[498px] bg-[#393438]" />;

const Properties = () => (
  <>
    <div className="relative h-[118px] shrink-0 border-b border-[#3e3a3d] bg-[#323232]">
      <div className="h-[50px] w-[494px] text-center text-[22px] leading-[48px] tracking-[-0.65px]">Properties: Viewport</div>
      <GearButton />
      <div className="flex items-center gap-[16px] pl-[206px] pt-[6px]">
        <svg className="h-[36px] w-[44px]" viewBox="0 0 44 36" fill="none" stroke="#157efb" strokeWidth={2.200}>
          <path d="M2 8.500h10l4-7h12l4 7h10v24H30M14 32.500H2V8.500" />
          <circle cx="22" cy="22" r="12" /><circle cx="22" cy="22" r="8.500" />
        </svg>
        <div className="flex h-[40px] w-[44px] border-2 border-[#9c9c9c] p-[3px]"><div className="flex-1 border border-[#6b6b6b] p-[3px]"><div className="h-full border border-[#808080]" /></div></div>
      </div>
    </div>
    <div className="h-[563px] shrink-0 pt-[20px]">
      <div className="flex h-[33px] items-center">
        <div className="w-[108px] text-right tracking-[0.2px]">Title:</div>
        <div className="ml-[19px] flex h-[32px] w-[361px] items-center border border-b-2 border-[#403b3e] border-b-[#625e60] bg-[#312b2f] pl-[5px]">Top</div>
      </div>
      <div className="mt-[17px] flex h-[30px] items-center"><div className="w-[108px] text-right">Size:</div><div className="ml-[17px] tracking-[0.1px]">1766 x 1312</div></div>
      <div className="mt-[14px] flex h-[30px] items-center gap-[8px] pl-[56px]"><Check />Locked</div>
      <div className="pt-[23px]"><Rule /></div>
      <div className="mt-[15px] h-[30px] pl-[16px] leading-[30px]">Projection</div>
      <div className="mt-[3px] flex h-[30px] items-center gap-[8px] pl-[58px]"><Radio on />Parallel</div>
      <div className="flex h-[30px] items-center gap-[8px] pl-[58px]"><Radio />Perspective</div>
      <div className="flex h-[30px] items-center gap-[8px] pl-[58px]"><Radio />Two point perspective</div>
      <div className="pt-[44px]"><Rule /></div>
      <div className="mt-[15px] h-[30px] pl-[16px] leading-[30px]">Wallpaper</div>
      <div className="mt-[14px] flex h-[30px] items-center pl-[66px]"><div className="w-[175px] tracking-[-0.1px]">Choose...</div><UpDown /></div>
      <div className="mt-[14px] flex h-[30px] items-center gap-[8px] pl-[56px] tracking-[-0.05px] text-[#646063]"><Check dim />Show wallpaper</div>
      <div className="mt-[14px] flex h-[30px] items-center gap-[8px] pl-[56px] tracking-[-0.05px] text-[#646063]"><Check dim />Show wallpaper as gray scale</div>
    </div>
  </>
);

const Bulb = ({ kind }: { kind: "dim" | "on" | "off" }) => (
  <svg className={kind === "dim" ? "h-[30px] w-[26px] opacity-40" : "h-[30px] w-[26px]"} viewBox="0 0 26 30">
    <path d="M13 0.500C4 0.500 0.500 5 0.500 9.500c0 5 6 8 6.500 13h12c0.500-5 6.500-8 6.500-13C25.500 5 22 0.500 13 0.500z" fill={kind === "off" ? "#f1f6fb" : "url(#bulbOn)"} />
    {kind === "off" && <path d="M10 21L8 10l5 4 5-4-2 11" fill="none" stroke="#d3dde6" />}
    {kind !== "off" && <ellipse cx="13" cy="8" rx="8" ry="4" fill="#fff0a0" opacity={0.700} />}
    <path d="M8 22.500h10v5l-3 2.500h-4l-3-2.500z" fill="#aab4bb" />
    <path d="M10 22.500h3v6h-3z" fill="#fff" />
  </svg>
);

const Lock = ({ dim }: { dim?: boolean }) => (
  <svg className={dim ? "h-[30px] w-[30px] opacity-40" : "h-[30px] w-[30px]"} viewBox="0 0 30 30">
    <path d="M14.500 16V8q0-6 6-6t6 6v5" fill="none" stroke="#8f8f8f" strokeWidth={5} />
    <path d="M14.500 16V8q0-6 6-6t6 6v5" fill="none" stroke="#e2e2e2" strokeWidth={3} />
    <path d="M2 16q10-6 20 0v11H2z" fill="url(#lockBody)" />
    <path d="M2 18h20M2 21h20M2 24h20" stroke="#a85a18" strokeWidth={0.800} />
    <path d="M1 28.500h23" stroke="#cfcfcf" strokeWidth={2.500} />
  </svg>
);

const LAYERS: [string, string, "dim" | "on" | "off"][] = [
  ["fr1 board", "bg-[#fff733]", "dim"],
  ["engraving", "bg-[#c77b78]", "on"],
  ["cutting", "bg-[#9149d1]", "on"],
  ["Layer 03", "bg-[#0a3cff]", "off"],
  ["Layer 04", "bg-[#008a12]", "on"],
  ["Layer 05", "bg-white", "on"],
];

const ColLine = () => <div className="h-[32px] w-[2px] shrink-0 bg-[#454043]" />;

const LayersPanel = () => (
  <>
    <div className="h-[3px] shrink-0 bg-[#7e7e7e]" />
    <div className="relative h-[176px] shrink-0 border-b border-[#3e3a3d] bg-[#323232]">
      <div className="h-[45px] w-[494px] text-center text-[22px] leading-[48px] tracking-[-0.55px]">Panels: Layers</div>
      <GearButton />
      <div className="ml-[18px] flex w-[480px] flex-wrap justify-center">
        <Cell><g stroke="#157efb"><path d="M30 12l22.500 13L30 38 7.500 25z" /><path d="M13 30l-5.500 3.500L30 47l22.500-13.500L47 30" /></g></Cell>
        <Cell>
          <path d="M34 37l-4 1.500L8 26l22-12.500L52 26M13 31l-5 3.500L33 48" />
          <path d="M35 28h12l5.500 6v18H35zM46 28v7h6" fill="#323232" />
        </Cell>
        <Cell><path d="M19 12h16l9 9v26H19zM35 12v9h9" strokeWidth={2.200} /></Cell>
        <Cell><path d="M27 13l20 7v19L32 51l-20.500-7.500V23zM11.500 23L32 30l15-10M32 30v21" /></Cell>
        <Cell><path d="M44 42V20c0-8 7-8 7-1h-8M48 13.500H23c-5 0-6 3-6 7v22M11 43h25c-4 3 0 8 4 6 4-1 4-3 4-7M36 43c3-1 5 3 2 4M38 50H15c-6 0-6-7-1-7" /></Cell>
        <Cell><rect x="10" y="12" width="40" height="33" rx="2" /><path d="M13.500 16h33v21h-33zM26 45l-2 5M34 45l2 5M17 50.500h26" /></Cell>
        <Cell>
          <circle cx="30" cy="31" r="19" />
          <path d="M22 25c0-12 17-11 17-1 0 7-8 6-8 14" strokeWidth={3} /><circle cx="31" cy="44" r="1.500" fill={LINE} stroke={LINE} strokeWidth={1.500} />
        </Cell>
        <Cell>
          <path d="M9 13v39h40L34 36M9 13l17 17" />
          <path d="M14 42l18-20-3-3c-4-3-7-3-7-5 5-5 13-5 19-1l4 6 3 0 4 4-6 6-5-6-4 2-18 22c-5 4-9-1-5-5z" fill="#323232" />
        </Cell>
        <Cell><path d="M13 9h26l6 6v37H13zM39 9v7h6" strokeWidth={2.200} /><path d="M17 16h24v31H17zM29 16v31M17 31h24" stroke="#666" strokeWidth={1.800} /></Cell>
      </div>
    </div>
    <div className="flex h-[54px] shrink-0 items-center border-b-2 border-[#3a3539] font-medium text-[#f4f4f4]">
      <div className="w-[183px] pl-[54px]">Name</div>
      <ColLine /><div className="w-[44px]" /><ColLine /><div className="w-[44px]" /><ColLine /><div className="w-[44px]" /><ColLine />
      <div className="w-[58px]" /><ColLine /><div className="w-[46px]" /><ColLine /><div className="pl-[6px] tracking-[0.1px]">Linetype</div>
    </div>
    <div className="h-[384px] shrink-0 pt-[10px]">
      {LAYERS.map(([name, color, bulb], i) => (
        <div key={name} className={i === 1 ? "flex h-[34px] items-center overflow-hidden bg-[#464646] whitespace-nowrap" : "flex h-[34px] items-center overflow-hidden whitespace-nowrap"}>
          <div className="w-[195px] shrink-0 -translate-y-px pl-[54px]">{name}</div>
          <div className="-translate-y-px"><Radio on={i === 0} light={i === 1} /></div>
          <div className="ml-[21px]"><Bulb kind={bulb} /></div>
          <div className="ml-[18px]"><Lock dim={i === 0} /></div>
          <div className={color + " ml-[24px] h-7 w-7 shrink-0"} />
          <div className="ml-[20px] h-7 w-7 shrink-0 rounded-full border-2 border-black bg-white" />
          <div className="ml-[25px] w-[87px] shrink-0 tracking-[-0.2px]">Conti...</div>
          <div className="shrink-0"><UpDown /></div>
        </div>
      ))}
    </div>
    <div className="flex flex-1 items-center border-t-2 border-[#393438] pl-[36px]">
      <div className="flex h-[32px] w-[99px] items-center rounded-[8px] border-2 border-[#332e31]">
        <svg className="h-5 w-[48px]" viewBox="0 0 48 20" stroke="#989597" strokeWidth={2}><path d="M14 9h18M23 0v18" /></svg>
        <div className="h-5 w-[2px] bg-[#332e31]" />
        <svg className="h-5 w-[48px]" viewBox="0 0 48 20" stroke="#989597" strokeWidth={2}><path d="M16 9h18" /></svg>
      </div>
      <div className="ml-[33px] flex h-[32px] w-[64px] items-center justify-center gap-[10px] rounded-[7px] border-t border-[#7b777a] bg-[#5f5b5e]">
        <GearShape color="#333133" size="h-[20px] w-[20px]" /><Down color="#f0f0f0" />
      </div>
    </div>
  </>
);

/* ---------- status bar ---------- */

const StatusBar = () => (
  <div className="flex h-[56px] items-center border-t-2 border-black bg-[#323232] pt-px text-[22px] tracking-[-0.07px] text-[#e4e4e4] whitespace-nowrap">
    <svg className="ml-[10px] h-5 w-[26px]" viewBox="0 0 26 20" stroke="#b5b5b5" strokeWidth={2} strokeLinecap="round">
      <path d="M8 2h17M8 10h17M8 18h17M1.500 2h0.500M1.500 10h0.500M1.500 18h0.500" />
    </svg>
    <div className="ml-[6px] w-[1497px]">File successfully saved as /Users/jessie/Documents/cut.dxf.</div>
    <div className="w-[147px]">Millimeters</div>
    <div className="flex h-[32px] w-[140px] items-center justify-between rounded-[7px] border-2 border-[#6a6a6a] pl-[7px] pr-[8px]"><span className="-translate-y-0.5">CPlane</span><UpDown /></div>
    <div className="ml-[28px] w-[163px]">X: 37.208</div>
    <div className="w-[170px]">Y: 78.618</div>
    <div>Z: 0.000</div>
  </div>
);

export default function App() {
  return (
    <div className="flex h-[1600px] w-[2560px] flex-col overflow-hidden bg-[#262024] font-[Inter,sans-serif] text-[22px] text-[#e0dfe0] [font-feature-settings:'calt'_0]">
      <Defs />
      <SnapBar />
      <TabStrip />
      <Toolbar />
      <div className="flex h-[1364px]">
        <LeftColumn />
        <Viewport />
        <div className="flex w-[532px] shrink-0 flex-col border-l-2 border-[#7e7e7e] bg-[#262024]">
          <Properties />
          <LayersPanel />
        </div>
      </div>
      <StatusBar />
    </div>
  );
}
